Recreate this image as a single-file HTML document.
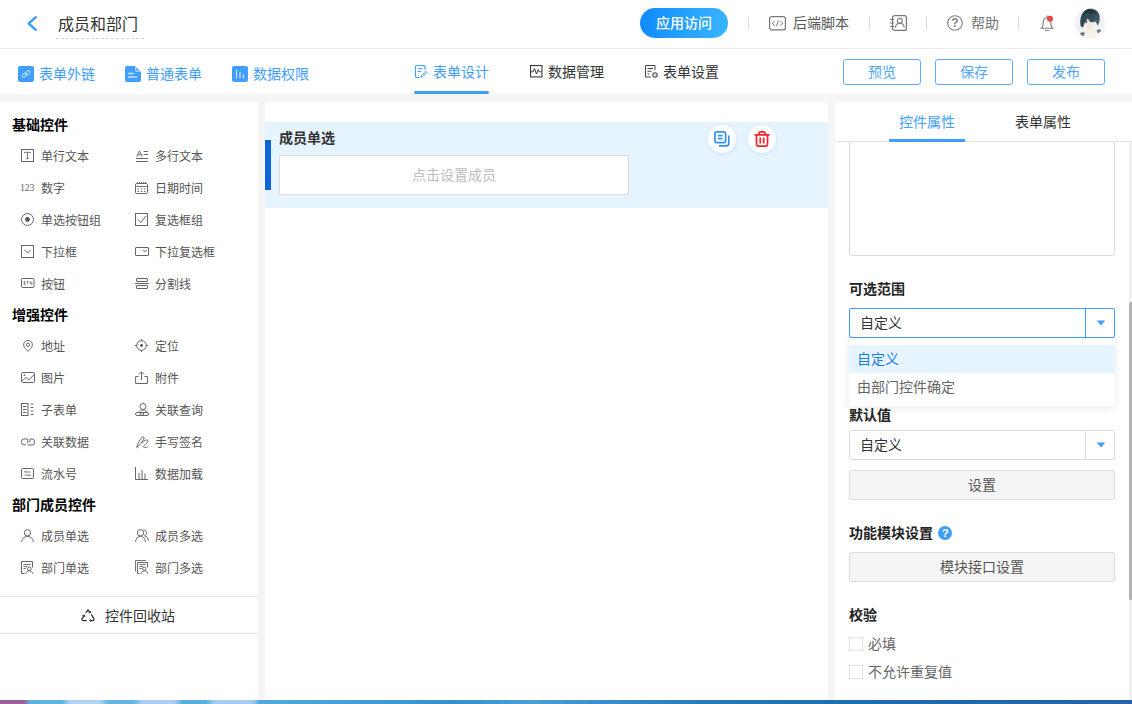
<!DOCTYPE html>
<html lang="zh-CN">
<head>
<meta charset="utf-8">
<title>成员和部门</title>
<style>
*{box-sizing:border-box;margin:0;padding:0}
html,body{width:1132px;height:704px;overflow:hidden;background:#f5f5f5}
body{font-family:"Liberation Sans","Noto Sans CJK SC",sans-serif;font-size:14px;color:#333;position:relative}
.abs{position:absolute}
.t{position:absolute;white-space:nowrap;line-height:20px;height:20px}
svg{position:absolute;overflow:visible}
/* header */
#hdr{left:0;top:0;width:1132px;height:49px;background:#fff;border-bottom:1px solid #ececec}
#nav{left:0;top:49px;width:1132px;height:45px;background:#fff}
.blue{color:#409eff}
.sep{position:absolute;width:1px;height:14px;top:16px;background:#dcdcdc}
.btn{position:absolute;top:59px;width:78px;height:26px;border:1px solid #5cadff;border-radius:3px;color:#4ea5fb;font-size:14px;line-height:24px;text-align:center;background:#fff}
/* left */
#left{left:0;top:102px;width:258px;height:598px;background:#fff;border-radius:0 4px 0 0}
.h{position:absolute;left:12px;font-weight:bold;font-size:14px;color:#000;line-height:20px;white-space:nowrap}
.it{position:absolute;font-size:12px;color:#555;line-height:16px;white-space:nowrap;margin-top:1px}
.c1{left:41px}.c2{left:155px}
/* canvas */
#cv{left:265px;top:102px;width:563px;height:598px;background:#fff;border-radius:4px 4px 0 0}
/* right */
#right{left:835px;top:102px;width:297px;height:598px;background:#fff;border-radius:4px 0 0 0}
.lab{position:absolute;left:849px;font-weight:bold;font-size:14px;color:#222;line-height:20px;white-space:nowrap}
.gbtn{position:absolute;left:849px;width:266px;height:30px;background:#f5f5f5;border:1px solid #ddd;border-radius:2px;text-align:center;line-height:28px;color:#555;font-size:14px}
</style>
</head>
<body>
<!-- HEADER -->
<div id="hdr" class="abs"></div>
<div id="nav" class="abs"></div>
<!-- back arrow -->
<svg style="left:26px;top:15px" width="12" height="17" viewBox="0 0 12 17"><path d="M9.800 2.200 L2.600 8.500 L9.800 14.800" fill="none" stroke="#409eff" stroke-width="2.400" stroke-linecap="round" stroke-linejoin="round"/></svg>
<div class="t" style="left:58px;top:14px;font-size:16px;color:#333;line-height:22px;height:22px">成员和部门</div>
<div class="abs" style="left:56px;top:38px;width:88px;height:1px;background:repeating-linear-gradient(90deg,#d4d4d4 0,#d4d4d4 3px,transparent 3px,transparent 5px)"></div>
<!-- app visit -->
<div class="abs" style="left:640px;top:8px;width:88px;height:30px;border-radius:15px;background:linear-gradient(100deg,#108aff,#3ab6ff);color:#fff;font-size:14px;line-height:30px;text-align:center;font-weight:500">应用访问</div>
<div class="sep" style="left:748px"></div>
<svg style="left:769px;top:16px" width="17" height="14.500" viewBox="0 0 17 14.500"><rect x=".6" y=".6" width="15.800" height="13.300" rx="2" fill="none" stroke="#777" stroke-width="1.200"/><path d="M5.800 4.800 L3.300 7.250 L5.800 9.700 M11.200 4.800 L13.700 7.250 L11.200 9.700 M9.500 4.300 L7.500 10.200" fill="none" stroke="#777" stroke-width="1"/></svg>
<div class="t" style="left:793px;top:13px;color:#555">后端脚本</div>
<div class="sep" style="left:869px"></div>
<svg style="left:890px;top:15px" width="17" height="16" viewBox="0 0 17 16"><rect x="2.600" y=".6" width="13.800" height="14.800" rx="2" fill="none" stroke="#777" stroke-width="1.200"/><path d="M0 4.500h4M0 8h4M0 11.500h4" stroke="#777" stroke-width="1.100"/><circle cx="9.800" cy="5.800" r="2.500" fill="none" stroke="#777" stroke-width="1.100"/><path d="M5.300 12.600c.4-2.900 2-4.300 4.500-4.300s4.100 1.400 4.500 4.300" fill="none" stroke="#777" stroke-width="1.100"/></svg>
<div class="sep" style="left:926px"></div>
<svg style="left:947px;top:15px" width="16" height="16" viewBox="0 0 16 16"><circle cx="8" cy="8" r="7.300" fill="none" stroke="#7c7c7c" stroke-width="1.1"/></svg>
<div class="t" style="left:947px;top:13px;width:16px;text-align:center;font-size:12px;font-weight:bold;color:#808080">?</div>
<div class="t" style="left:971px;top:13px;color:#757575">帮助</div>
<div class="sep" style="left:1018px"></div>
<svg style="left:1040px;top:15px" width="14" height="16" viewBox="0 0 14 16"><path d="M.8 13.200h12.400M1.600 13c1.300-1 1.600-2.500 1.600-5.500 0-3 1.700-4.800 3.800-4.800s3.800 1.800 3.800 4.800c0 3 .3 4.500 1.600 5.500M7 2.500V.8M5.300 15.500h3.400" fill="none" stroke="#7c7c7c" stroke-width="1.100" stroke-linecap="round" stroke-linejoin="round"/><circle cx="10" cy="3.800" r="3" fill="#e84646"/></svg>
<!-- avatar -->
<svg style="left:1075px;top:8px" width="30" height="30" viewBox="0 0 30 30"><defs><clipPath id="avc"><circle cx="15" cy="15" r="15"/></clipPath><filter id="avb" x="-20%" y="-20%" width="140%" height="140%"><feGaussianBlur stdDeviation=".5"/></filter><linearGradient id="avh" x1="0" y1="0" x2="1" y2="1"><stop offset="0" stop-color="#283e47"/><stop offset=".6" stop-color="#35505a"/><stop offset="1" stop-color="#5b7680"/></linearGradient></defs><g clip-path="url(#avc)"><rect width="30" height="30" fill="#f2f2f4"/><g filter="url(#avb)"><path d="M7.500 30c.3-4 1.500-7.500 3.500-9.500l7.500-1c2.500 2 4 6 4.500 10.500z" fill="#f7f2ec"/><ellipse cx="14" cy="17.200" rx="4.800" ry="5.200" fill="#f4e8e3"/><path d="M9.500 22c-.5-2 0-4.500 1.500-6l1.500 1.500c-.5 2-1 4-1.500 6zM17.500 22.500c0-2 .5-4 1.500-6l1.500-.5c.5 2 0 4.500-1 6.500z" fill="#f8efe6"/><path d="M5.500 17.500C4.300 9.500 7.500 1.500 14.500.8c5-.4 9 2.300 10 6.800.8 3.500 0 7.400-1.500 10.200-.8-1.300-1.500-2.800-2.500-4.300-1.800.8-3.800.9-6.300.1.300-1 .2-1.800-.2-2.600-1.300 2-2.800 3.200-4.300 4-.8 1.500-1.300 3-1.500 4.500-1.400-.2-2.400-.8-2.700-2z" fill="url(#avh)"/><path d="M8 6.500C9.500 3 13 1.500 16 1.800c2.500.3 4.500 1.500 5.500 3.700-2-.6-3.500-.4-5 .5-2.500-1.300-5.500-1.300-8.500.5z" fill="#22363e"/><path d="M11.300 12.500l.9-2.500.9 3z" fill="#e8f2f6"/><circle cx="11.600" cy="14.600" r=".7" fill="#b04a55"/><path d="M4.800 25.200l3-1.200 2 .8-.8 3-2.700.4z" fill="#5a6672" opacity=".85"/><path d="M21.500 22.300l3.800-1.300.5 2.500-3 1.700z" fill="#5a6672" opacity=".85"/></g></g></svg>

<!-- NAV -->
<svg style="left:18px;top:66px" width="16" height="16" viewBox="0 0 16 16"><rect width="16" height="16" rx="2" fill="#409eff"/><g transform="rotate(-38 8 8)" fill="none" stroke="#e4f2ff" stroke-width=".9"><rect x="3.400" y="6.500" width="5" height="3" rx="1.500"/><rect x="7.600" y="6.500" width="5" height="3" rx="1.500"/></g></svg>
<div class="t blue" style="left:39px;top:64px">表单外链</div>
<svg style="left:125px;top:66px" width="16" height="16" viewBox="0 0 16 16"><path d="M2 0h8L16 6V14a2 2 0 0 1-2 2H2a2 2 0 0 1-2-2V2a2 2 0 0 1 2-2z" fill="#409eff"/><path d="M10.800 0.800V5.200H15.200" fill="none" stroke="#fff" stroke-width=".8"/><path d="M3 7.500h6M3 11h9" stroke="#c4e2fe" stroke-width="1.500"/></svg>
<div class="t blue" style="left:146px;top:64px">普通表单</div>
<svg style="left:232px;top:66px" width="16" height="16" viewBox="0 0 16 16"><rect width="16" height="16" rx="2" fill="#409eff"/><path d="M4.500 3.800v8.700M8 6v6.500M11.500 8v4.500" stroke="#d4e9ff" stroke-width="1.100"/></svg>
<div class="t blue" style="left:253px;top:64px">数据权限</div>

<svg style="left:415px;top:65px" width="12" height="13" viewBox="0 0 12 13"><path d="M10 4.800V1.500a1 1 0 0 0-1-1H1.500a1 1 0 0 0-1 1v10a1 1 0 0 0 1 1H4.500" fill="none" stroke="#409eff" stroke-width="1.150"/><path d="M2.800 3.800h5M2.800 6.500h3.500" stroke="#409eff" stroke-width="1.100"/><path d="M6 12.300l.5-2 4.100-4.100 1.200 1.200-4.100 4.100z" fill="none" stroke="#409eff" stroke-width="1"/></svg>
<div class="t blue" style="left:433px;top:62px">表单设计</div>
<div class="abs" style="left:414px;top:91px;width:75px;height:3px;background:#409eff;border-radius:1.500px"></div>

<svg style="left:530px;top:65px" width="12.500" height="12.500" viewBox="0 0 12.500 12.500"><rect x=".55" y=".55" width="11.400" height="11.400" fill="none" stroke="#3a3a3a" stroke-width="1.100"/><path d="M1 6.800h2l1.500-3.300 2 5.500 1.700-4.500 1.200 2.300h2" fill="none" stroke="#3a3a3a" stroke-width="1"/></svg>
<div class="t" style="left:548px;top:62px;color:#333">数据管理</div>

<svg style="left:644.500px;top:65px" width="13" height="12.500" viewBox="0 0 13 12.500"><path d="M10 5V.5H.5v11.500H6" fill="none" stroke="#444" stroke-width="1"/><path d="M2.500 3.500h5.500M2.500 6.200h4M2.500 9h2" stroke="#444" stroke-width="1"/><circle cx="10" cy="10" r="2.200" fill="none" stroke="#444" stroke-width="1.100"/><circle cx="10" cy="10" r=".6" fill="#444"/></svg>
<div class="t" style="left:663px;top:62px;color:#333">表单设置</div>

<div class="btn" style="left:843px">预览</div>
<div class="btn" style="left:935px">保存</div>
<div class="btn" style="left:1027px">发布</div>

<!-- LEFT -->
<div id="left" class="abs"></div>
<div class="h" style="top:115px">基础控件</div>
<div class="h" style="top:305px">增强控件</div>
<div class="h" style="top:495px">部门成员控件</div>
<svg style="left:21px;top:149px" width="13" height="13" viewBox="0 0 13 13" fill="none" stroke="#666" stroke-width="1"><rect x=".5" y=".5" width="12" height="12"/><path d="M3.500 4.200V3.300h6v.9M6.500 3.300v6.200M5.200 9.700h2.600" stroke-width=".9"/></svg>
<div class="it c1" style="top:148px">单行文本</div>
<svg style="left:136px;top:150px" width="13" height="12" viewBox="0 0 13 12" fill="none" stroke="#666" stroke-width="1"><path d="M.7 6.800L3.500.8l2.800 6M1.700 4.800h3.600" stroke-width=".9"/><path d="M7.500 1.500h4.500M7.500 4.500h4.500M0 8.500h12M0 11.500h12" stroke-width="1"/></svg>
<div class="it c2" style="top:148px">多行文本</div>
<div class="abs" style="left:20px;top:180px;font-family:'Liberation Serif',serif;font-size:10px;line-height:16px;color:#666;letter-spacing:-.3px">123</div>
<div class="it c1" style="top:180px">数字</div>
<svg style="left:135px;top:182px" width="13" height="13" viewBox="0 0 13 13" fill="none" stroke="#666" stroke-width="1"><rect x=".5" y="1.500" width="12" height="10" rx="1.200"/><path d="M2.500 0v2M4.500 0v2M6.500 0v2M8.500 0v2M10.500 0v2M.5 4.500h12" stroke-width=".9"/><path d="M2.500 7h1.500M5.700 7h1.500M8.900 7h1.500M2.500 9.500h1.500M5.700 9.500h1.500M8.900 9.500h1.500" stroke-width="1.200"/></svg>
<div class="it c2" style="top:180px">日期时间</div>
<svg style="left:21px;top:213px" width="13" height="13" viewBox="0 0 13 13" fill="none" stroke="#666" stroke-width="1"><circle cx="6.500" cy="6.500" r="6"/><circle cx="6.500" cy="6.500" r="2.400" fill="#555" stroke="none"/></svg>
<div class="it c1" style="top:212px">单选按钮组</div>
<svg style="left:135px;top:213px" width="13" height="13" viewBox="0 0 13 13" fill="none" stroke="#666" stroke-width="1"><rect x=".5" y=".5" width="12" height="12"/><path d="M2.800 6.200l3 3.300L11 2.800"/></svg>
<div class="it c2" style="top:212px">复选框组</div>
<svg style="left:21px;top:245px" width="13" height="13" viewBox="0 0 13 13" fill="none" stroke="#666" stroke-width="1"><rect x=".5" y=".5" width="12" height="12"/><path d="M3.300 4.800L6.500 8l3.200-3.200"/></svg>
<div class="it c1" style="top:244px">下拉框</div>
<svg style="left:135px;top:247px" width="14" height="9" viewBox="0 0 14 9" fill="none" stroke="#666" stroke-width="1"><rect x=".5" y=".5" width="13" height="8" rx=".5"/><path d="M8.300 3l1.700 1.800L11.700 3"/></svg>
<div class="it c2" style="top:244px">下拉复选框</div>
<svg style="left:21px;top:278px" width="14" height="10" viewBox="0 0 14 10" fill="none" stroke="#666" stroke-width="1"><rect x=".5" y=".5" width="12.500" height="9" rx=".8"/><path d="M3 3.500v3h1v-1.500h-1m1 0v-1.500h-1M5.600 3.500h2.200M6.700 3.500v3M9.200 6.500v-3l1.700 3v-3" stroke-width=".65"/></svg>
<div class="it c1" style="top:276px">按钮</div>
<svg style="left:135px;top:278px" width="14" height="12" viewBox="0 0 14 12" fill="none" stroke="#666" stroke-width="1"><rect x="1.500" y=".5" width="11" height="3" rx=".5"/><path d="M0 5.500h14"/><rect x="1.500" y="7.500" width="11" height="3" rx=".5"/></svg>
<div class="it c2" style="top:276px">分割线</div>
<svg style="left:22.500px;top:340px" width="10" height="12" viewBox="0 0 10 12" fill="none" stroke="#666" stroke-width="1"><path d="M5 11.400C2.300 8.600.6 6.700.6 4.800a4.400 4.400 0 0 1 8.800 0c0 1.900-1.700 3.800-4.400 6.600z"/><circle cx="5" cy="4.800" r="1.700"/></svg>
<div class="it c1" style="top:338px">地址</div>
<svg style="left:135px;top:339px" width="13" height="13" viewBox="0 0 13 13" fill="none" stroke="#666" stroke-width="1"><circle cx="6.500" cy="6.500" r="4.800"/><circle cx="6.500" cy="6.500" r="1.400" fill="#555" stroke="none"/><path d="M6.500 0v2M6.500 11v2M0 6.500h2M11 6.500h2"/></svg>
<div class="it c2" style="top:338px">定位</div>
<svg style="left:21px;top:372px" width="14" height="11" viewBox="0 0 14 11" fill="none" stroke="#666" stroke-width="1"><rect x=".5" y=".5" width="13" height="10" rx="1"/><path d="M1 9.300L5 5.300l2.700 2.700L13 2.800"/><circle cx="3.400" cy="3.200" r=".9" fill="#666" stroke="none"/></svg>
<div class="it c1" style="top:370px">图片</div>
<svg style="left:135px;top:371px" width="13" height="13" viewBox="0 0 13 13" fill="none" stroke="#666" stroke-width="1"><path d="M3.500 5.500H.6v7h11.800v-7H9.500M6.500 9V1M3.800 3.500L6.500.8l2.700 2.700"/></svg>
<div class="it c2" style="top:370px">附件</div>
<svg style="left:21px;top:403px" width="13" height="13" viewBox="0 0 13 13" fill="none" stroke="#666" stroke-width="1"><rect x=".5" y=".5" width="6.500" height="12"/><path d="M2 3.500h3.500M2 6.500h3.500M2 9.500h3.500M9.500 1h3M9.500 4.500h3M9.500 8h3M9.500 11.500h3"/></svg>
<div class="it c1" style="top:402px">子表单</div>
<svg style="left:135px;top:403px" width="14" height="14" viewBox="0 0 14 14" fill="none" stroke="#666" stroke-width="1"><circle cx="8" cy="3.500" r="3"/><path d="M4 8.600C4.800 7.500 6 7 8 7s3.700.8 4.500 2.500"/><rect x=".5" y="9.500" width="8" height="3" rx="1.500"/><rect x="5.500" y="9.500" width="8" height="3" rx="1.500"/></svg>
<div class="it c2" style="top:402px">关联查询</div>
<svg style="left:21px;top:437.500px" width="14" height="8" viewBox="0 0 14 8" fill="none" stroke="#666" stroke-width="1"><path d="M6.800 1H2.800A2.300 2.300 0 0 0 .5 3.300v1.200a2.300 2.300 0 0 0 2.300 2.300H5"/><path d="M6.800 1v4.500M6.800 7H11.200a2.300 2.300 0 0 0 2.300-2.300V3.300A2.300 2.300 0 0 0 11.200 1H9v3.500"/></svg>
<div class="it c1" style="top:434px">关联数据</div>
<svg style="left:135.500px;top:435.500px" width="13" height="12" viewBox="0 0 13 12" fill="none" stroke="#666" stroke-width="1"><path d="M.7 11.600C1 8.800 3.800 3.300 6.800.7c.9.200 1.400.700 1.500 1.500C6.300 5.800 3.500 9.800.7 11.600z"/><path d="M6.300 6.800c1.800-2.300 4.300-3.500 5.300-2.600s-.4 2.900-2.300 4.300-2.800 2.500-1 2.900 2.400-.2 3.400-.7"/></svg>
<div class="it c2" style="top:434px">手写签名</div>
<svg style="left:21px;top:468px" width="13" height="12" viewBox="0 0 13 12" fill="none" stroke="#666" stroke-width="1"><rect x=".5" y=".5" width="12" height="10" rx="1"/><path d="M3.500 4h6M3.500 7h6M5 2.500L3.500 4M8 8.500L9.500 7" stroke-width=".9"/></svg>
<div class="it c1" style="top:466px">流水号</div>
<svg style="left:135px;top:467px" width="13" height="13" viewBox="0 0 13 13" fill="none" stroke="#666" stroke-width="1"><path d="M.5 0v12.500H13M4 12V6M7 12V3M10 12V6.500"/></svg>
<div class="it c2" style="top:466px">数据加载</div>
<svg style="left:21px;top:529px" width="13" height="13" viewBox="0 0 13 13" fill="none" stroke="#666" stroke-width="1"><circle cx="6.500" cy="3.800" r="3.200"/><path d="M.6 12.800c.6-3.500 2.800-5.400 5.900-5.400s5.300 1.900 5.900 5.400"/></svg>
<div class="it c1" style="top:528px">成员单选</div>
<svg style="left:135px;top:529px" width="14" height="13" viewBox="0 0 14 13" fill="none" stroke="#666" stroke-width="1"><circle cx="5.500" cy="3.800" r="3.200"/><path d="M.5 12.800c.5-3.500 2.300-5.400 5-5.400s4.500 1.900 5 5.400M8.500 .8c2 .2 3 1.500 3 3s-.8 2.500-2 3c2.500.6 3.700 2.500 4 5"/></svg>
<div class="it c2" style="top:528px">成员多选</div>
<svg style="left:21px;top:561px" width="13" height="14" viewBox="0 0 13 14" fill="none" stroke="#666" stroke-width="1"><path d="M3.500 12.500H.5V.5h11v6"/><path d="M2.500 3.500h7M2.500 5.500h4M2.500 7.500h2.500" stroke-width=".9"/><circle cx="8.300" cy="7.800" r="1.800"/><path d="M4.600 12.800c.8-2.200 2-3 3.700-3s2.900.8 3.700 3"/></svg>
<div class="it c1" style="top:560px">部门单选</div>
<svg style="left:135px;top:560px" width="14" height="14" viewBox="0 0 14 14" fill="none" stroke="#666" stroke-width="1"><path d="M4.500 13.500H2.500V2.500h10v5"/><path d="M.5 11.500V.5H11" stroke-width=".9"/><path d="M4.300 4.500h6.500M4.300 6.500h4M4.300 8.500h2.500" stroke-width=".9"/><circle cx="9.300" cy="8.700" r="1.700"/><path d="M5.800 13.800c.7-2.100 1.900-2.900 3.500-2.900s2.800.8 3.500 2.900"/></svg>
<div class="it c2" style="top:560px">部门多选</div>
<div class="abs" style="left:0;top:596px;width:258px;height:1px;background:#e4e4e4"></div>
<div class="abs" style="left:0;top:633px;width:258px;height:1px;background:#e4e4e4"></div>
<svg style="left:80.500px;top:609px" width="14" height="13" viewBox="0 0 14 13" fill="none" stroke="#333" stroke-width="1.300" stroke-linejoin="round"><path d="M4.800 3.800L7 .8l2.200 3M10.300 5.300l2.500 4.300c.5 1.100-.1 2-1.200 2H9.300M5.800 11.600H2.400c-1.100 0-1.700-.9-1.200-2L3.300 6"/><path d="M7.800 3.900l1.700-.2.200-1.700M4 8L3.400 6 1.500 6.500M10 10l-1.400 1.600L10 13" stroke-width="1"/></svg>
<div class="t" style="left:105px;top:606px;color:#333">控件回收站</div>
<!-- CANVAS -->
<div id="cv" class="abs"></div>
<div class="abs" style="left:265px;top:122px;width:563px;height:86px;background:#e6f4ff"></div>
<div class="abs" style="left:265px;top:140px;width:6px;height:50px;background:#0c64d8"></div>
<div class="t" style="left:279px;top:128px;font-weight:bold;color:#333">成员单选</div>
<div class="abs" style="left:279px;top:155px;width:350px;height:40px;background:#fff;border:1px solid #dcdcdc;text-align:center;line-height:38px;color:#bdbdbd;font-size:14px">点击设置成员</div>
<div class="abs" style="left:708px;top:125px;width:28px;height:28px;border-radius:50%;background:#fff;box-shadow:0 1px 4px rgba(120,170,220,.25)"></div>
<div class="abs" style="left:748px;top:125px;width:28px;height:28px;border-radius:50%;background:#fff;box-shadow:0 1px 4px rgba(120,170,220,.25)"></div>
<svg style="left:714px;top:131px" width="16" height="16" viewBox="0 0 16 16" fill="none" stroke="#3492f5" stroke-width="1.700"><rect x=".9" y=".9" width="10.700" height="10.700" rx="2.200"/><path d="M3.800 4.700h4.800M3.800 7.700h4.800" stroke-width="1.700"/><path d="M14.800 4.500v8a2.300 2.300 0 0 1-2.300 2.300H5"/></svg>
<svg style="left:754px;top:131px" width="16" height="16" viewBox="0 0 16 16" fill="none" stroke="#f5222d" stroke-width="1.700"><path d="M.5 3.800h15M5 3.500V2.200a1.400 1.400 0 0 1 1.400-1.400h3.200A1.400 1.400 0 0 1 11 2.200v1.300M2.500 4v9.500a1.600 1.600 0 0 0 1.600 1.600h7.800a1.600 1.600 0 0 0 1.600-1.600V4M6.300 6.500v6M9.700 6.500v6"/></svg>
<!-- RIGHT -->
<div id="right" class="abs"></div>
<div class="t blue" style="left:899px;top:112px">控件属性</div>
<div class="t" style="left:1015px;top:112px;color:#333">表单属性</div>
<div class="abs" style="left:835px;top:141px;width:297px;height:1px;background:#e2e2e2"></div>
<div class="abs" style="left:889px;top:139px;width:76px;height:3px;background:#409eff"></div>
<div class="abs" style="left:849px;top:142px;width:266px;height:114px;border:1px solid #dcdcdc;border-top:none;border-radius:0 0 3px 3px"></div>

<div class="lab" style="top:279px">可选范围</div>
<div class="abs" style="left:849px;top:308px;width:266px;height:30px;border:1px solid #409eff;border-radius:2px;background:#fff"></div>
<div class="abs" style="left:1085px;top:309px;width:1px;height:28px;background:#409eff"></div>
<div class="t" style="left:860px;top:313px;color:#333">自定义</div>
<svg style="left:1096px;top:320px" width="10" height="6" viewBox="0 0 10 6"><path d="M.8.600h8.400L5 5.400z" fill="#409eff"/></svg>

<div class="lab" style="top:405px">默认值</div>
<div class="abs" style="left:849px;top:430px;width:266px;height:30px;border:1px solid #dcdcdc;border-radius:2px;background:#fff"></div>
<div class="abs" style="left:1085px;top:431px;width:1px;height:28px;background:#dcdcdc"></div>
<div class="t" style="left:860px;top:435px;color:#333">自定义</div>
<svg style="left:1096px;top:442px" width="10" height="6" viewBox="0 0 10 6"><path d="M.8.600h8.400L5 5.400z" fill="#409eff"/></svg>
<div class="gbtn" style="top:470px">设置</div>

<div class="lab" style="top:523px">功能模块设置</div>
<div class="abs" style="left:938px;top:526px;width:14.400px;height:14.400px;border-radius:50%;background:#409eff;color:#fff;font-size:11.500px;font-weight:bold;line-height:14.400px;text-align:center">?</div>
<div class="gbtn" style="top:552px">模块接口设置</div>

<div class="lab" style="top:605px">校验</div>
<div class="abs" style="left:849px;top:637px;width:14px;height:14px;border:1px solid #e0e0e0;background:#fff"></div>
<div class="t" style="left:868px;top:634px;color:#666">必填</div>
<div class="abs" style="left:849px;top:665px;width:14px;height:14px;border:1px solid #e0e0e0;background:#fff"></div>
<div class="t" style="left:868px;top:662px;color:#666">不允许重复值</div>

<!-- dropdown -->
<div class="abs" style="left:849px;top:340px;width:266px;height:66px;background:#fff;border-radius:3px;box-shadow:0 2px 8px rgba(0,0,0,.09)"></div>
<div class="abs" style="left:849px;top:345px;width:266px;height:28px;background:#e6f4ff"></div>
<div class="t" style="left:857px;top:349px;color:#1b7fe0">自定义</div>
<div class="t" style="left:857px;top:377px;color:#666">由部门控件确定</div>

<!-- scrollbar -->
<div class="abs" style="left:1129px;top:142px;width:3px;height:558px;background:#f1f1f1"></div>
<div class="abs" style="left:1129px;top:302px;width:3px;height:298px;background:#b2b2b2;border-radius:2px 0 0 2px"></div>

<!-- bottom strip -->
<div class="abs" id="strip" style="left:0;top:700px;width:1132px;height:4px;background:linear-gradient(90deg,#9c6098 0,#9c6098 24px,#5fb2de 30px,#62b4e0 62px,#b3d3f3 70px,#b3d3f3 100px,#66b4df 108px,#66b4df 134px,#aacdf0 142px,#aacdf0 175px,#5aaede 182px,#5aaede 206px,#a6cbee 214px,#a6cbee 252px,#52a9dc 260px,#459fd6 350px,#3690cc 450px,#4a9fd5 530px,#3a8fca 600px,#2c7aba 700px,#2170b4 800px,#1f68ad 950px,#2765a8 1132px)"></div>
</body>
</html>
